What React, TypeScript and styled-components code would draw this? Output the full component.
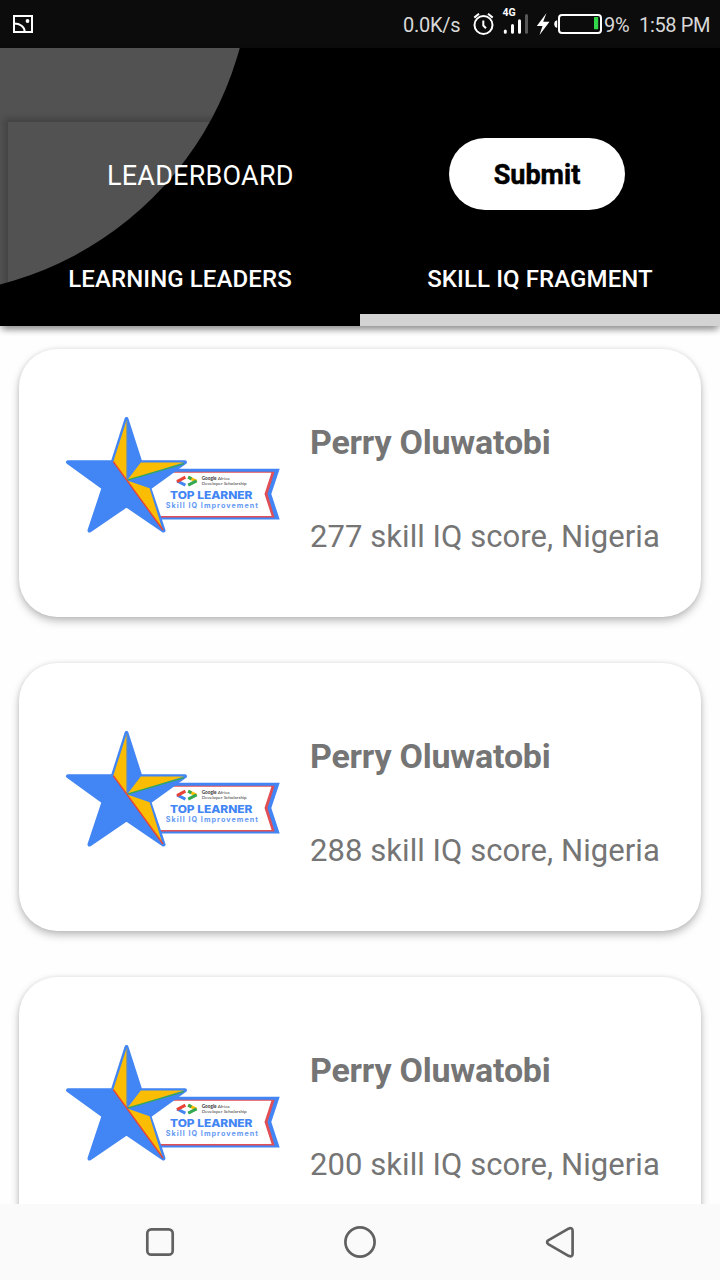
import React from "react";
import styled, { createGlobalStyle } from "styled-components";

const GlobalStyle = createGlobalStyle`
  * { box-sizing: border-box; }
  body { margin: 0; background: #fefefe; font-family: Roboto, "Liberation Sans", sans-serif; }
`;

const Screen = styled.div`
  width: 720px;
  height: 1280px;
  display: flex;
  flex-direction: column;
  overflow: hidden;
  background: #fefefe;
`;

const StatusBar = styled.div`
  flex: none;
  height: 48px;
  padding: 0 10px 0 12px;
  display: flex;
  align-items: center;
  justify-content: space-between;
  background: #0c0c0c;
  color: #d8d8d8;
  white-space: nowrap;
`;

const StatusGroup = styled.div`
  display: flex;
  align-items: center;
`;

const StatusText = styled.span<{ $width: number; $gap?: number; $tracking?: number }>`
  width: ${(p) => p.$width}px;
  margin-left: ${(p) => p.$gap ?? 0}px;
  padding-top: 1px;
  font-size: 20px;
  line-height: 24px;
  letter-spacing: ${(p) => p.$tracking ?? 0}px;
`;

const Header = styled.header`
  flex: none;
  position: relative;
  z-index: 1;
  height: 278px;
  display: flex;
  flex-direction: column;
  background: #000;
  color: #fff;
  box-shadow: 0 3px 7px rgba(0, 0, 0, 0.32);
`;

const Backdrop = styled.svg`
  position: absolute;
  left: 0;
  top: 0;
`;

const Panel = styled.div`
  position: relative;
  margin: 74px 8px 0;
  height: 204px;
  box-shadow: 0 0 6px 4px rgba(0, 0, 0, 0.18);
`;

const TitleRow = styled.div`
  height: 104px;
  padding: 16px 87px 0 99px;
  display: flex;
  align-items: flex-start;
  justify-content: space-between;
`;

const Title = styled.h1`
  margin: 20px 0 0;
  font-weight: 400;
  font-size: 27px;
  line-height: 36px;
  letter-spacing: 0.22px;
`;

const SubmitButton = styled.button`
  width: 176px;
  height: 72px;
  border: 0;
  padding: 2px 0 0;
  border-radius: 36px;
  background: #fff;
  color: #000;
  font-family: inherit;
  font-weight: 700;
  font-size: 27px;
  -webkit-text-stroke: 0.5px #000;
`;

const Tabs = styled.div`
  margin: 0 -8px;
  height: 100px;
  display: grid;
  grid-template-columns: 1fr 1fr;
`;

const Tab = styled.div<{ $active?: boolean }>`
  border-bottom: 12px solid ${(p) => (p.$active ? "#d3d3d3" : "transparent")};
  padding-top: 38px;
  text-align: center;
  font-weight: 500;
  font-size: 24px;
  line-height: 30px;
  letter-spacing: 0.1px;
`;

const List = styled.main`
  flex: 1;
  min-height: 0;
  overflow: hidden;
  display: flex;
  flex-direction: column;
  gap: 46px;
  padding: 23px 19px 0;
`;

const Card = styled.article`
  flex: none;
  height: 268px;
  display: flex;
  padding: 0 0 0 41px;
  border-radius: 38px;
  background: #fff;
  box-shadow: 0 4px 8px rgba(0, 0, 0, 0.26), 0 0 4px rgba(0, 0, 0, 0.08);
`;

const CardText = styled.div`
  padding: 71px 0 0 20px;
  color: #757575;
  white-space: nowrap;
`;

const Name = styled.h2`
  margin: 0;
  font-weight: 700;
  font-size: 34px;
  line-height: 44px;
  letter-spacing: -0.22px;
`;

const Score = styled.p`
  margin: 51px 0 0;
  font-size: 31px;
  line-height: 44px;
  letter-spacing: 0.06px;
`;

const BadgeArt = styled.svg`
  flex: none;
  margin-top: 61px;
`;

const NavBar = styled.nav`
  flex: none;
  position: relative;
  z-index: 1;
  height: 76px;
  padding: 0 144px;
  display: flex;
  align-items: center;
  justify-content: space-between;
  background: #fafafa;
`;

function StarBadge() {
  return (
    <BadgeArt width="230" height="130" viewBox="60 410 230 130">
      <path d="M150 468.7H279.7L271.3 494L279.7 519.6H150Z" fill="#4285f4" />
      <path d="M150 471.8H274.6L267.5 494L274.6 517.4H150Z" fill="#e04f55" />
      <path d="M150 472.8H271.4L264.5 494L271.6 516H150Z" fill="#fff" />
      <path
        d="M126.5 419L140.3 462.2H185L149.3 488L163.5 530.5L126.5 505.3L89.5 530.5L103.6 488L68 462.2H112.8Z"
        fill="#4285f4"
        stroke="#4285f4"
        strokeWidth="4"
        strokeLinejoin="round"
      />
      <path d="M126.5 420.5V480.2L113.3 461.7Z" fill="#fbbc04" />
      <path d="M140.8 462.6H184L127.2 480.2Z" fill="#fbbc04" />
      <path d="M127.2 480.4L149.6 488.3L162.5 529.5Z" fill="#fbbc04" />
      <path d="M127.2 480.2L184 463.6" stroke="#34a853" strokeWidth="1.4" />
      <path d="M126.8 420V480" stroke="#929a78" strokeWidth=".7" />
      <path d="M113.3 461.7L163 530" stroke="#ea4335" strokeWidth="1.4" />
      <g fill="none" strokeWidth="3">
        <path d="M177 481L185.4 485.2" stroke="#4285f4" />
        <path d="M177 481.6L185.4 477.2" stroke="#ea4335" />
        <path d="M188.2 477.2L196.6 481.4" stroke="#fbbc04" />
        <path d="M188.2 485.2L196.6 480.8" stroke="#34a853" />
        <path d="M188.2 477.2L191.4 478.8" stroke="#34a853" />
      </g>
      <text x="201.7" y="479.8" fontFamily="Lato" fontSize="4.6" fill="#444" textLength="28" lengthAdjust="spacingAndGlyphs">
        <tspan fontWeight="900">Google</tspan> Africa
      </text>
      <text x="201.7" y="485.1" fontFamily="Lato" fontSize="4.6" fill="#333" textLength="45" lengthAdjust="spacingAndGlyphs">
        Developer Scholarship
      </text>
      <text x="170" y="498.8" fontFamily="Inter" fontWeight="800" fontSize="10.8" fill="#4285f4" textLength="82.5" lengthAdjust="spacingAndGlyphs">
        TOP LEARNER
      </text>
      <text x="165.7" y="507.7" fontFamily="Inter" fontWeight="700" fontSize="7.2" fill="#649af5" textLength="92.2" lengthAdjust="spacing">
        Skill IQ Improvement
      </text>
    </BadgeArt>
  );
}

function StatusIcons() {
  return (
    <svg width="132" height="48" viewBox="471 0 132 48">
      <g fill="none" stroke="#fff" strokeWidth="2">
        <circle cx="483.5" cy="25" r="9" />
        <path d="M483.3 20.5V25.5L486 28.3" />
        <path d="M474.3 17.6L479 13.8M488 13.8L492.7 17.6" />
      </g>
      <text x="502.5" y="16.2" fontFamily="Roboto" fontWeight="700" fontSize="10.5" fill="#fff" textLength="13.2">
        4G
      </text>
      <g strokeWidth="3" strokeLinecap="round">
        <path d="M505.3 31V32.2M512.5 25.5V32.2M519.5 20.8V32.2" stroke="#fff" />
        <path d="M526.5 15.5V32.2" stroke="#585858" />
      </g>
      <path d="M546.5 13L536.8 26H542.5L539.5 35L549.5 21.8H543.2Z" fill="#fff" />
      <rect x="559" y="15" width="42" height="18" rx="3" fill="none" stroke="#fff" strokeWidth="2" />
      <path d="M557.2 20.2V27.8C553.2 27.3 553.2 20.7 557.2 20.2Z" fill="#fff" />
      <rect x="594" y="17" width="4.2" height="12.2" rx=".5" fill="#32d74b" />
    </svg>
  );
}

const entries = [
  { name: "Perry Oluwatobi", score: 277, country: "Nigeria" },
  { name: "Perry Oluwatobi", score: 288, country: "Nigeria" },
  { name: "Perry Oluwatobi", score: 200, country: "Nigeria" },
];

export default function App() {
  return (
    <Screen>
      <GlobalStyle />
      <StatusBar>
        <svg width="22" height="48" viewBox="12 0 22 48" fill="none" stroke="#fff" strokeWidth="2">
          <path d="M14 16H32V32H14Z" />
          <path d="M14 23.5C20 23.5 24.7 26.5 24.7 32" />
          <circle cx="27.5" cy="21" r="1.9" fill="#fff" stroke="none" />
        </svg>
        <StatusGroup>
          <StatusText $width={68} $tracking={-0.25}>0.0K/s</StatusText>
          <StatusIcons />
          <StatusText $width={35} $gap={1} $tracking={-0.3}>9%</StatusText>
          <StatusText $width={71} $tracking={-0.35}>1:58 PM</StatusText>
        </StatusGroup>
      </StatusBar>
      <Header>
        <Backdrop width="720" height="278" viewBox="0 48 720 278">
          <circle cx="-83" cy="-39.5" r="334.4" fill="#525252" />
        </Backdrop>
        <Panel>
          <TitleRow>
            <Title>LEADERBOARD</Title>
            <SubmitButton>Submit</SubmitButton>
          </TitleRow>
          <Tabs>
            <Tab>LEARNING LEADERS</Tab>
            <Tab $active>SKILL IQ FRAGMENT</Tab>
          </Tabs>
        </Panel>
      </Header>
      <List>
        {entries.map((entry) => (
          <Card key={entry.score}>
            <StarBadge />
            <CardText>
              <Name>{entry.name}</Name>
              <Score>
                {entry.score} skill IQ score, {entry.country}
              </Score>
            </CardText>
          </Card>
        ))}
      </List>
      <NavBar>
        <svg width="32" height="36" viewBox="144 1224 32 36" fill="none" stroke="#616161" strokeWidth="2.7">
          <rect x="147.3" y="1229.3" width="25.4" height="25.4" rx="4" />
        </svg>
        <svg width="36" height="36" viewBox="342 1224 36 36" fill="none" stroke="#616161" strokeWidth="2.7">
          <circle cx="360" cy="1242" r="14.6" />
        </svg>
        <svg width="32" height="36" viewBox="544 1224 32 36" fill="none" stroke="#616161" strokeWidth="2.7">
          <path d="M548.2 1240.4L568.5 1228.7Q572.6 1227 572.6 1231V1253.7Q572.6 1257.5 568.5 1255.8L548.2 1244.1Q546 1242.2 548.2 1240.4Z" strokeLinejoin="round" />
        </svg>
      </NavBar>
    </Screen>
  );
}
